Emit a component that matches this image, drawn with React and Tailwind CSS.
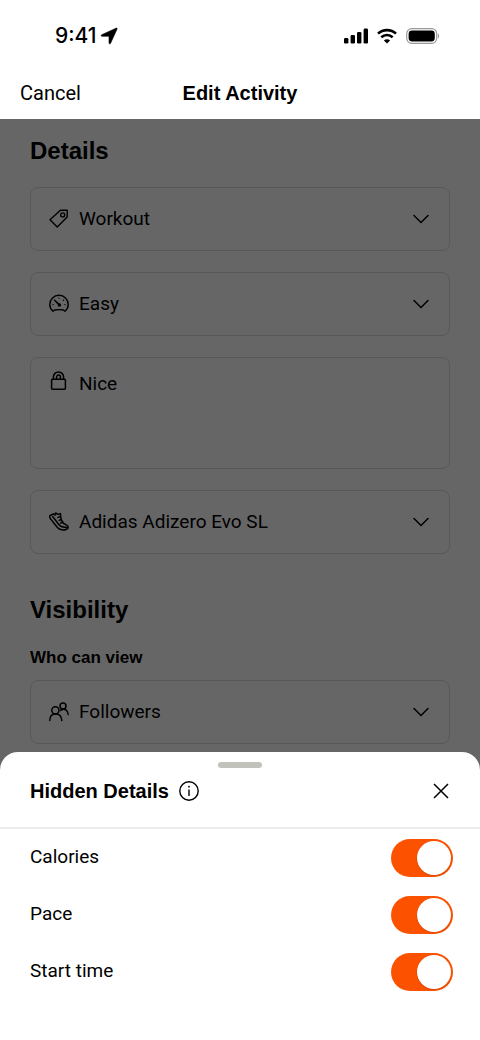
import React, { useState } from "react";

const TagIcon = () => (
  <svg viewBox="0 0 20 20" className="w-5 h-5" fill="none" stroke="currentColor" strokeWidth="1.4" strokeLinejoin="round">
    <path d="M11.4 1.2H18.2V8L8.2 18L1 10.8Z" />
    <circle cx="13.7" cy="5.9" r="2" />
  </svg>
);

const GaugeIcon = () => (
  <svg viewBox="0 0 20 20" className="w-5 h-5" fill="none" stroke="currentColor" strokeWidth="1.4" strokeLinecap="round" strokeLinejoin="round">
    <path d="M4 17.2C2 15.6.8 13.2.8 10.4a9.2 9.2 0 0 1 18.4 0c0 2.8-1.2 5.2-3.2 6.8l-1.6-1.2q-4.4-.8-8.8 0Z" />
    <path d="M5.6 6.2L9.8 10.4" strokeWidth="1.6" />
    <circle cx="10.4" cy="11" r="1" fill="currentColor" />
    <path d="M10 4.1h.01M14.4 6.2h.01M16 10.6h.01M4 10.6h.01" />
  </svg>
);

const LockIcon = () => (
  <svg viewBox="0 0 20 20" className="w-5 h-5" fill="none" stroke="currentColor" strokeWidth="1.5" strokeLinejoin="round">
    <rect x="2.6" y="8.2" width="13.8" height="10" rx="1" />
    <path d="M4.4 8.2V6a5.1 5.1 0 0 1 10.2 0v2.2" />
    <path d="M7.6 8.2V6a1.9 1.9 0 0 1 3.8 0v2.2" />
  </svg>
);

const ShoeIcon = () => (
  <svg viewBox="0 0 20 20" className="w-5 h-5" fill="none" stroke="currentColor" strokeWidth="1.5" strokeLinecap="round" strokeLinejoin="round">
    <path d="M.8 3.6L4.4 1.8L6 3L6.6 1L9 2.4L11.4 1.6L12 7.2L14.2 11C15.4 12.4 19.2 12.8 19.2 15C19.2 17.4 15.8 18.2 12.6 17.8C9.8 17.4 8.2 15.8 6.6 13.2L2 7.4C1 6.2.5 4.8.8 3.6Z" />
    <path d="M3.6 4.4L10 12.8C11.6 14.8 14.8 15.4 18.6 15.6" />
    <path d="M9 5.4L11.4 4.6M10.2 8.4L12 7.6M11.6 11.2L13.6 10.2" />
  </svg>
);

const PeopleIcon = () => (
  <svg viewBox="0 0 20 20" className="w-5 h-5" fill="none" stroke="currentColor" strokeWidth="1.5" strokeLinecap="round">
    <circle cx="6.4" cy="8.3" r="3.6" />
    <path d="M.8 18.6C.8 14.6 3 12 6.6 12S12.600 14.600 12.800 18.600" />
    <circle cx="14" cy="4" r="3" />
    <path d="M11.6 8.4C15.6 5.6 19.2 8.4 19.2 12.6" />
  </svg>
);

const ChevronIcon = () => (
  <svg viewBox="0 0 16 16" className="w-4 h-4" fill="none" stroke="currentColor" strokeWidth="1.5" strokeLinecap="round">
    <path d="M1 4.5L8 11.5L15 4.5" />
  </svg>
);

const StatusBar = () => (
  <div className="flex items-center justify-between h-[72px] pl-[55px] pr-10">
    <div className="flex items-center gap-[3px]">
      <span className="font-['Inter'] font-medium text-[21px]">9:41</span>
      <svg viewBox="0 0 18 18" className="w-[18px] h-[18px]" fill="currentColor" stroke="currentColor" strokeWidth=".6">
        <path d="M16 1.2C17 .8 17.4 1.4 17 2.2L10.6 16.2C10.2 17.2 9 17 9 16V9.3H2C1 9.3.8 8.1 1.8 7.7Z" />
      </svg>
    </div>
    <div className="flex items-center gap-[9px]">
      <svg viewBox="0 0 24 16" className="w-6 h-4" fill="currentColor">
        <rect x="0" y="10" width="4.4" height="5.6" rx="1.3" />
        <rect x="6.6" y="7" width="4.4" height="8.6" rx="1.3" />
        <rect x="13" y="4" width="4.4" height="11.6" rx="1.3" />
        <rect x="19.6" y=".6" width="4.4" height="15" rx="1.3" />
      </svg>
      <svg viewBox="0 0 20 16" className="w-5 h-4" fill="none" stroke="currentColor" strokeWidth="2.6">
        <path d="M1 5.6C6 .9 14 .9 19 5.6" />
        <path d="M4.3 9.2C7.5 6.3 12.5 6.3 15.7 9.2" />
        <path d="M10 15.6L6.9 12.5C8.7 10.9 11.3 10.9 13.1 12.5Z" fill="currentColor" stroke="none" />
      </svg>
      <svg viewBox="0 0 34 16" className="w-[34px] h-4">
        <rect x=".7" y=".7" width="30" height="14.6" rx="5" fill="none" stroke="#999" strokeWidth="1.2" />
        <rect x="2.6" y="2.6" width="26.2" height="10.8" rx="3.4" fill="#000" />
        <path d="M32 5.6v4.8c1.4-.6 1.4-4.2 0-4.8Z" fill="#999" />
      </svg>
    </div>
  </div>
);

const SelectField = ({ label, icon, options }) => (
  <div className="relative flex items-center">
    <span className="absolute left-[19px] pointer-events-none">{icon}</span>
    <select
      aria-label={label}
      className="appearance-none w-full h-16 pl-12 pr-12 text-[19px] bg-transparent border border-[#dcdcdc] rounded-lg"
    >
      {options.map((option) => (
        <option key={option}>{option}</option>
      ))}
    </select>
    <span className="absolute right-[21px] pointer-events-none">
      <ChevronIcon />
    </span>
  </div>
);

const ToggleRow = ({ label, checked, onChange }) => (
  <label className="flex items-center justify-between h-[57px]">
    <span className="text-[19px]">{label}</span>
    <input
      type="checkbox"
      role="switch"
      checked={checked}
      onChange={onChange}
      className="appearance-none flex items-center w-[62px] h-[38px] p-[2px] rounded-full bg-gray-300 checked:bg-[#fc5200] before:w-[34px] before:h-[34px] before:rounded-full before:bg-white before:shadow checked:before:ml-auto"
    />
  </label>
);

const App = () => {
  const [notes, setNotes] = useState("Nice");
  const [hidden, setHidden] = useState({
    Calories: true,
    Pace: true,
    "Start time": true,
  });

  const handleToggle = (name) => {
    setHidden((prev) => ({ ...prev, [name]: !prev[name] }));
  };

  return (
    <div className="flex flex-col h-screen overflow-hidden bg-white text-black font-['Roboto',sans-serif]">
      <header>
        <StatusBar />
        <div className="grid grid-cols-3 items-center h-[47px] px-5 pb-[6px] text-xl">
          <button className="justify-self-start">Cancel</button>
          <h1 className="font-['Liberation_Sans',sans-serif] font-bold text-center whitespace-nowrap">
            Edit Activity
          </h1>
        </div>
      </header>

      <main className="relative flex-1 overflow-hidden px-[30px]">
        <h2 className="pt-4 text-2xl font-['Liberation_Sans',sans-serif] font-bold">Details</h2>
        <div className="flex flex-col gap-[21px] mt-5">
          <SelectField label="Activity type" icon={<TagIcon />} options={["Workout", "Race", "Long Run"]} />
          <SelectField label="Effort" icon={<GaugeIcon />} options={["Easy", "Moderate", "Hard"]} />
          <div className="relative">
            <span className="absolute left-[19px] top-[14px] pointer-events-none">
              <LockIcon />
            </span>
            <textarea
              aria-label="Private notes"
              value={notes}
              onChange={(e) => setNotes(e.target.value)}
              className="block w-full h-28 pl-12 pr-5 pt-3 text-[19px] resize-none border border-[#dcdcdc] rounded-lg"
            />
          </div>
          <SelectField label="Gear" icon={<ShoeIcon />} options={["Adidas Adizero Evo SL", "None"]} />
        </div>

        <h2 className="mt-10 text-2xl font-['Liberation_Sans',sans-serif] font-bold">Visibility</h2>
        <h3 className="mt-5 mb-[10px] text-[17px] leading-6 font-['Liberation_Sans',sans-serif] font-bold">
          Who can view
        </h3>
        <SelectField label="Who can view" icon={<PeopleIcon />} options={["Followers", "Everyone", "Only You"]} />

        {/* Scrim behind the sheet */}
        <div className="absolute inset-0 bg-black/60"></div>
      </main>

      {/* Bottom sheet */}
      <section className="fixed inset-x-0 bottom-0 pb-10 bg-white rounded-t-[18px]">
        <div className="flex flex-col items-center h-[77px] pt-[10px] border-b-2 border-[#ececec]">
          <div className="w-11 h-[6px] rounded-full bg-[#c2c2bd]"></div>
          <div className="flex items-center w-full px-[30px] pt-[9px]">
            <h2 className="text-xl font-['Liberation_Sans',sans-serif] font-bold">Hidden Details</h2>
            <button aria-label="About hidden details" className="ml-[10px]">
              <svg viewBox="0 0 20 20" className="w-5 h-5" fill="none" stroke="currentColor" strokeWidth="1.4">
                <circle cx="10" cy="10" r="9.2" />
                <path d="M10 8.4V15" />
                <circle cx="10" cy="5.7" r=".9" fill="currentColor" stroke="none" />
              </svg>
            </button>
            <button aria-label="Close" className="ml-auto">
              <svg viewBox="0 0 18 18" className="w-[18px] h-[18px]" fill="none" stroke="currentColor" strokeWidth="1.5">
                <path d="M2 2L16 16M16 2L2 16" />
              </svg>
            </button>
          </div>
        </div>
        <div className="pl-[30px] pr-[27px]">
          {Object.keys(hidden).map((name) => (
            <ToggleRow
              key={name}
              label={name}
              checked={hidden[name]}
              onChange={() => handleToggle(name)}
            />
          ))}
        </div>
      </section>
    </div>
  );
};

export default App;
